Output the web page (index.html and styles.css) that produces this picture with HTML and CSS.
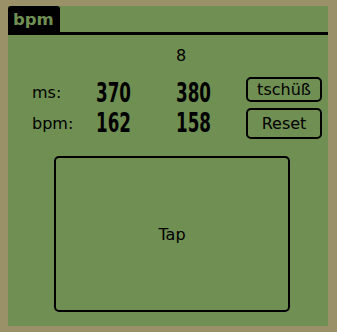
FILE: index.html
```html
<!DOCTYPE html>
<html>
<head>
<meta charset="utf-8">
<link rel="stylesheet" href="styles.css">
</head>
<body>
<div class="screen">
  <div class="titlebar"><div class="tab">bpm</div></div>
  <div class="row count-row">
    <span></span><span></span><span class="count">8</span>
  </div>
  <div class="row ms-row">
    <span class="label">ms:</span>
    <span class="num">370</span>
    <span class="num">380</span>
    <button class="btn btn-short">tschüß</button>
  </div>
  <div class="row bpm-row">
    <span class="label">bpm:</span>
    <span class="num">162</span>
    <span class="num">158</span>
    <button class="btn btn-tall">Reset</button>
  </div>
  <div class="tap">Tap</div>
</div>
</body>
</html>
```

FILE: styles.css
```css
html, body {
  margin: 0;
  padding: 0;
}
body {
  background: #9a9169;
  width: 337px;
  height: 332px;
  overflow: hidden;
  font-family: "DejaVu Sans", sans-serif;
  color: #000;
}
.screen {
  margin: 6px 0 0 8px;
  width: 320px;
  height: 320px;
  background: #708f53;
  display: flex;
  flex-direction: column;
}
.titlebar {
  height: 26px;
  border-bottom: 3px solid #000;
  display: flex;
}
.tab {
  width: 52px;
  height: 26px;
  background: #000;
  color: #708f53;
  border-radius: 3px 3px 0 0;
  font: bold 16.5px/26px "DejaVu Sans", sans-serif;
  padding-left: 5px;
  box-sizing: border-box;
  padding-top: 1px;
}
.row {
  display: grid;
  grid-template-columns: 64px 80px 70px 76px;
  padding-left: 24px;
  align-items: start;
}
.count-row {
  margin-top: 9px;
  height: 24px;
}
.count {
  font-size: 16px;
  line-height: 24px;
}
.ms-row {
  margin-top: 9px;
  height: 26px;
}
.bpm-row {
  margin-top: 5px;
  height: 31px;
}
.label {
  font-size: 16px;
  line-height: 18px;
  margin-top: 7px;
}
.num {
  display: inline-block;
  justify-self: start;
  font: bold 27px/20px "DejaVu Sans", sans-serif;
  transform: scaleX(0.62);
  transform-origin: left center;
  margin-top: 6px;
}
.bpm-row .num {
  margin-top: 5px;
}
.btn {
  margin: 0;
  padding: 0;
  background: transparent;
  border: 2px solid #000;
  border-radius: 5px;
  font: 16px/18px "DejaVu Sans", sans-serif;
  color: #000;
  width: 76px;
  display: flex;
  align-items: center;
  justify-content: center;
  box-sizing: border-box;
}
.btn-short { height: 25px; }
.btn-tall { height: 31px; }
.tap {
  margin: 17px 0 0 46px;
  width: 236px;
  height: 156px;
  box-sizing: border-box;
  border: 2px solid #000;
  border-radius: 5px;
  display: flex;
  align-items: center;
  justify-content: center;
  font-size: 16px;
}
```
